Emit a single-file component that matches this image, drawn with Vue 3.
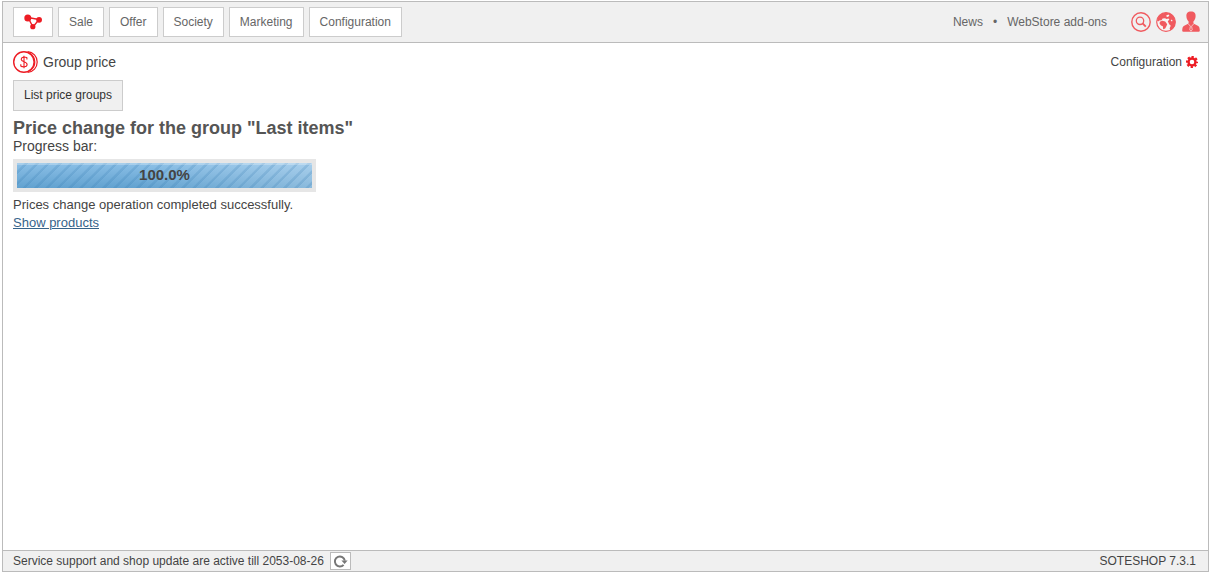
<script setup>
const menu = ['Sale', 'Offer', 'Society', 'Marketing', 'Configuration']
const progress = 100
</script>

<template>
  <div class="shell">
    <header class="topbar">
      <nav class="menu">
        <button type="button" class="menu-btn logo-btn" aria-label="Home">
          <svg width="20" height="18" viewBox="0 0 20 18">
            <path d="M5 4.5L16 6.5L10 14Z" fill="none" stroke="#ed1c24" stroke-width="1.4" />
            <circle cx="4.8" cy="4.9" r="3.5" fill="#ed1c24" />
            <circle cx="16.1" cy="6.8" r="2.9" fill="#ed1c24" />
            <circle cx="9.8" cy="13.7" r="2.6" fill="#ed1c24" />
          </svg>
        </button>
        <button v-for="item in menu" :key="item" type="button" class="menu-btn">{{ item }}</button>
      </nav>
      <div class="tools">
        <a href="#" class="tool-link">News</a>
        <span class="dot">•</span>
        <a href="#" class="tool-link">WebStore add-ons</a>
        <div class="icons">
          <button type="button" class="icon-btn" aria-label="Search">
            <svg width="20" height="20" viewBox="0 0 20 20" fill="none" stroke="#f05a5f">
              <circle cx="10" cy="10" r="9.2" stroke-width="1.4" />
              <circle cx="9" cy="8.8" r="3.7" stroke-width="1.3" />
              <path d="M11.6 11.4L14.8 14.6" stroke-width="1.9" />
            </svg>
          </button>
          <button type="button" class="icon-btn" aria-label="Language">
            <svg width="20" height="20" viewBox="0 0 20 20">
              <circle cx="10" cy="10" r="9.3" fill="#f7f3f3" stroke="#f05a5f" stroke-width="1.2" />
              <path d="M1 8.4C1.8 4 5.5 0.8 10 0.7C15.2 0.8 19.3 4.8 19.3 10C19.3 13.8 17.2 16.8 14.3 18.3L13.6 16.2L14.8 13.8L13.2 12.2L11.8 9.2L13.4 7.4L12.4 6.4L10.6 7L9 6.2L6.6 6.6L5.6 8.2L3.4 8.6L2.2 9.6Z" fill="#f05a5f" />
              <path d="M3.8 9.8L6.2 8.8L9.2 9.6L11.2 12.2L10.4 14.2L9.2 16.6L7.2 17.2L6.8 14.2L5 13.4L3.6 11.8Z" fill="#f05a5f" />
              <path d="M10.2 3.6L12.4 2.6L13.4 3.6L12 5L10.6 4.8ZM15.2 7.6L16.6 8.4L16 9.4L14.8 8.8Z" fill="#f7f3f3" />
            </svg>
          </button>
          <button type="button" class="icon-btn" aria-label="Account">
            <svg width="20" height="22" viewBox="0 0 20 22">
              <path d="M10 0.5C6.6 0.5 5.2 2.5 5.4 5.2C5.5 7.6 6.4 9.3 7.6 10.4V12.6L3.2 14.7C1.6 15.5 1.3 17 1.2 19.8Q1.2 20.8 2.4 20.8H17.6Q18.8 20.8 18.8 19.8C18.7 17 18.4 15.5 16.8 14.7L12.4 12.6V10.4C13.6 9.3 14.5 7.6 14.6 5.2C14.8 2.5 13.4 0.5 10 0.5Z" fill="#f05a5f" />
              <path d="M7.4 13L9.4 15.2L8.8 18.8L10 20.2L11.2 18.8L10.6 15.2L12.6 13" fill="none" stroke="#f8dcdd" stroke-width="0.8" />
            </svg>
          </button>
        </div>
      </div>
    </header>

    <main class="content">
      <div class="title-row">
        <div class="title">
          <svg width="25" height="24" viewBox="0 0 25 24" fill="none" stroke="#ed1c24">
            <path d="M14.6 1.6C20.2 2.1 24.2 6.6 24.2 12S20.2 21.9 14.6 22.4" stroke-width="1.2" />
            <path d="M17 3.4C20 5.4 21.8 8.4 21.8 12S20 18.6 17 20.6" stroke-width="1.2" />
            <circle cx="10.9" cy="12" r="10.2" stroke-width="1.4" />
            <path d="M13.9 9.6V7.8C12.4 6.7 8.2 6.6 8.2 9.3C8.2 12.2 14.1 11.3 14.1 14.5C14.1 17.3 9.4 17.2 7.8 16V14.2M11 5.7V18.3" stroke-width="1.1" />
          </svg>
          <span>Group price</span>
        </div>
        <a href="#" class="config">
          Configuration
          <svg width="12" height="12" viewBox="0 0 12 12" fill="none" stroke="#ed1c24">
            <circle cx="6" cy="6" r="3.5" stroke-width="2.4" />
            <circle cx="6" cy="6" r="5" stroke-width="2.2" stroke-dasharray="2.2 1.727" stroke-dashoffset="1.1" />
          </svg>
        </a>
      </div>
      <button type="button" class="list-btn">List price groups</button>
      <h1>Price change for the group "Last items"</h1>
      <div id="progress-label" class="label">Progress bar:</div>
      <div class="track" role="progressbar" aria-labelledby="progress-label" :aria-valuenow="progress">
        <div class="fill" :style="{ width: progress + '%' }"></div>
        <span class="percent">{{ progress.toFixed(1) }}%</span>
      </div>
      <p class="message">Prices change operation completed successfully.</p>
      <a href="#" class="show">Show products</a>
    </main>

    <footer class="footer">
      <div class="support">
        <span>Service support and shop update are active till 2053-08-26</span>
        <button type="button" class="refresh" aria-label="Refresh">
          <svg width="15" height="14" viewBox="0 0 15 14">
            <path d="M10.6 10.8A5 5 0 1 1 11.8 6.6" fill="none" stroke="#777" stroke-width="2" />
            <path d="M8.4 6.4H14.6L11.6 10Z" fill="#777" />
          </svg>
        </button>
      </div>
      <span>SOTESHOP 7.3.1</span>
    </footer>
  </div>
</template>

<style>
body {
  background: #fff;
}
</style>

<style scoped>
.shell {
  box-sizing: border-box;
  display: flex;
  flex-direction: column;
  min-height: calc(100vh - 4px);
  margin: 1px 2px 3px;
  border: 1px solid #bbb;
  font-family: "Liberation Sans", Arial, sans-serif;
  font-size: 12px;
  color: #444;
}
button {
  font: inherit;
  cursor: pointer;
}
svg {
  display: block;
}
.topbar {
  display: flex;
  justify-content: space-between;
  align-items: center;
  height: 40px;
  padding: 0 7px 0 10px;
  background: #f0f0f0;
  border-bottom: 1px solid #bbb;
}
.menu {
  display: flex;
  gap: 5px;
}
.menu-btn {
  height: 30px;
  padding: 0 10px;
  border: 1px solid #ccc;
  background: #fff;
  color: #666;
}
.logo-btn {
  padding: 0 9px;
}
.tools {
  display: flex;
  align-items: center;
  color: #666;
}
.tool-link {
  color: #666;
  text-decoration: none;
}
.dot {
  margin: 0 10px;
}
.icons {
  display: flex;
  align-items: center;
  gap: 5px;
  margin-left: 24px;
}
.icon-btn {
  padding: 0;
  border: 0;
  background: none;
}
.content {
  flex: 1;
  padding: 7px 10px;
}
.title-row {
  display: flex;
  justify-content: space-between;
  align-items: center;
  height: 24px;
}
.title {
  display: flex;
  align-items: center;
  gap: 5px;
  font-size: 14px;
}
.config {
  display: flex;
  align-items: center;
  gap: 4px;
  color: #444;
  text-decoration: none;
}
.list-btn {
  display: block;
  height: 31px;
  margin-top: 6px;
  padding: 0 10px 2px;
  border: 1px solid #ccc;
  background: #f0f0f0;
  color: #333;
}
h1 {
  margin: 7px 0 0;
  font-size: 18px;
  line-height: 20px;
  color: #555;
}
.label {
  font-size: 14px;
  line-height: 16px;
}
.track {
  position: relative;
  width: 295px;
  height: 25px;
  margin-top: 5px;
  border: 4px solid #e6e6e6;
}
.fill {
  height: 100%;
  background:
    linear-gradient(rgba(255, 255, 255, 0.25), rgba(255, 255, 255, 0.25)) top / 100% 2px no-repeat,
    repeating-linear-gradient(135deg, transparent 0 5px, rgba(50, 120, 175, 0.2) 6px 8px),
    linear-gradient(90deg, rgba(255, 255, 255, 0) 40%, rgba(255, 255, 255, 0.26)),
    linear-gradient(#8bbfe6, #62a2d0);
}
.percent {
  position: absolute;
  inset: 0;
  text-align: center;
  font-size: 15px;
  font-weight: bold;
  line-height: 24px;
}
.message {
  margin: 4px 0 0;
  font-size: 13px;
  line-height: 18px;
}
.show {
  font-size: 13px;
  line-height: 18px;
  color: #36648b;
}
.footer {
  display: flex;
  justify-content: space-between;
  align-items: center;
  height: 20px;
  padding: 0 12px 0 10px;
  border-top: 1px solid #bbb;
  background: #f0f0f0;
}
.support {
  display: flex;
  align-items: center;
  gap: 6px;
}
.refresh {
  display: flex;
  align-items: center;
  justify-content: center;
  width: 21px;
  height: 18px;
  padding: 0;
  border: 1px solid #bbb;
  background: #fff;
}
</style>
